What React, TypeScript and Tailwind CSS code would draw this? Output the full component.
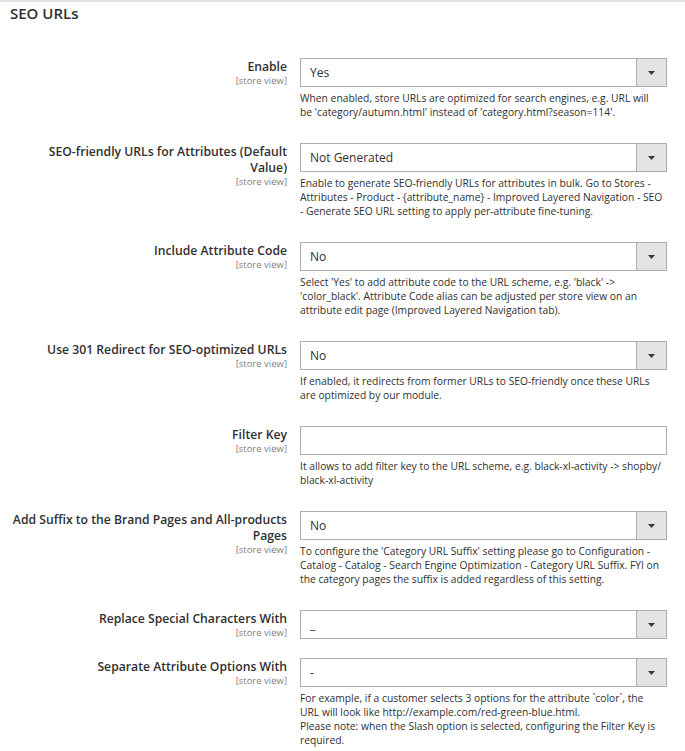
import React from 'react';

type Row = {
  label: string[];
  control: 'select' | 'input';
  value?: string;
  notes?: string[];
};

// note lines are broken the way the reference breaks them
const rows: Row[] = [
  {
    label: ['Enable'],
    control: 'select',
    value: 'Yes',
    notes: [
      'When enabled, store URLs are optimized for search engines, e.g. URL will',
      "be 'category/autumn.html' instead of 'category.html?season=114'.",
    ],
  },
  {
    label: ['SEO-friendly URLs for Attributes (Default', 'Value)'],
    control: 'select',
    value: 'Not Generated',
    notes: [
      'Enable to generate SEO-friendly URLs for attributes in bulk. Go to Stores -',
      'Attributes - Product - {attribute_name} - Improved Layered Navigation - SEO',
      '- Generate SEO URL setting to apply per-attribute fine-tuning.',
    ],
  },
  {
    label: ['Include Attribute Code'],
    control: 'select',
    value: 'No',
    notes: [
      "Select 'Yes' to add attribute code to the URL scheme, e.g. 'black' ->",
      "'color_black'. Attribute Code alias can be adjusted per store view on an",
      'attribute edit page (Improved Layered Navigation tab).',
    ],
  },
  {
    label: ['Use 301 Redirect for SEO-optimized URLs'],
    control: 'select',
    value: 'No',
    notes: [
      'If enabled, it redirects from former URLs to SEO-friendly once these URLs',
      'are optimized by our module.',
    ],
  },
  {
    label: ['Filter Key'],
    control: 'input',
    notes: [
      'It allows to add filter key to the URL scheme, e.g. black-xl-activity -> shopby/',
      'black-xl-activity',
    ],
  },
  {
    label: ['Add Suffix to the Brand Pages and All-products', 'Pages'],
    control: 'select',
    value: 'No',
    notes: [
      "To configure the 'Category URL Suffix' setting please go to Configuration -",
      'Catalog - Catalog - Search Engine Optimization - Category URL Suffix. FYI on',
      'the category pages the suffix is added regardless of this setting.',
    ],
  },
  {
    label: ['Replace Special Characters With'],
    control: 'select',
    value: '_',
  },
  {
    label: ['Separate Attribute Options With'],
    control: 'select',
    value: '-',
    notes: [
      'For example, if a customer selects 3 options for the attribute `color`, the',
      'URL will look like http://example.com/red-green-blue.html.',
      'Please note: when the Slash option is selected, configuring the Filter Key is',
      'required.',
    ],
  },
];

function SelectBox({ value }: { value?: string }) {
  return (
    <div className="flex h-[29px] w-full border border-[#adadad] bg-white">
      <div className="flex-1 flex items-center pl-[9px] text-[12px] text-[#303030]">
        {value}
      </div>
      <div className="w-[30px] flex items-center justify-center bg-[#e3e3e3] border-l border-[#adadad]">
        <svg width="7" height="4" viewBox="0 0 7 4">
          <polygon points="0,0 7,0 3.5,4" fill="#41362f" />
        </svg>
      </div>
    </div>
  );
}

export default function App() {
  return (
    <div
      className="w-[685px] min-h-[751px] bg-white border-t-2 border-[#e3e3e3] text-[#303030]"
      style={{ fontFamily: '"Open Sans", "Noto Sans", sans-serif' }}
    >
      {/* Section title */}
      <h2 className="pl-[10px] pt-[2px] text-[15px] leading-[18px] font-semibold text-[#303030]">
        SEO URLs
      </h2>

      <div className="pl-[10px] pt-[36px]">
        {rows.map((row) => (
          <div key={row.label.join(' ')} className="flex mb-[19px]">
            <div className="w-[277px] shrink-0 text-right pt-[1px]">
              {row.label.map((l) => (
                <div key={l} className="text-[12.2px] leading-[16px] font-semibold text-[#303030] whitespace-nowrap">
                  {l}
                </div>
              ))}
              <div className="text-[9.5px] leading-[12px] text-[#808080]">[store view]</div>
            </div>
            <div className="w-[367px] ml-[13px] shrink-0">
              {row.control === 'select' ? (
                <SelectBox value={row.value} />
              ) : (
                <div className="h-[29px] w-full border border-[#adadad] bg-white" />
              )}
              {row.notes && (
                <div className="mt-[4px] mb-[5px] text-[10.3px] leading-[14px] text-[#303030]">
                  {row.notes.map((n) => (
                    <div key={n} className="whitespace-nowrap">{n}</div>
                  ))}
                </div>
              )}
            </div>
          </div>
        ))}
      </div>
    </div>
  );
}
